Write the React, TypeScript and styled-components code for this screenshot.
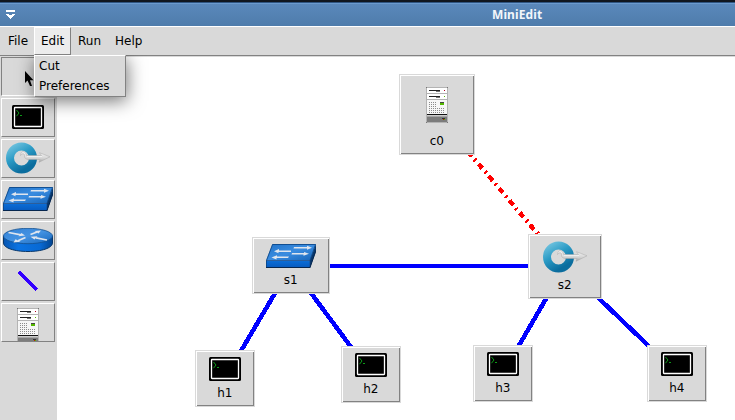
import type { ReactNode } from 'react';
import styled, { createGlobalStyle } from 'styled-components';

type Kind = 'host' | 'switch' | 'legacySwitch' | 'controller';

interface NodeData {
  id: string;
  kind: Kind;
  x: number;
  y: number;
  width: number;
  height: number;
}

const NODES: NodeData[] = [
  { id: 'c0', kind: 'controller', x: 399, y: 74, width: 76, height: 81 },
  { id: 's1', kind: 'legacySwitch', x: 252, y: 237, width: 78, height: 57 },
  { id: 's2', kind: 'switch', x: 528, y: 234, width: 74, height: 65 },
  { id: 'h1', kind: 'host', x: 195, y: 350, width: 60, height: 57 },
  { id: 'h2', kind: 'host', x: 341, y: 346, width: 60, height: 57 },
  { id: 'h3', kind: 'host', x: 473, y: 345, width: 60, height: 57 },
  { id: 'h4', kind: 'host', x: 647, y: 345, width: 60, height: 57 },
];

const LINKS = [
  [291, 266, 565, 266],
  [291, 266, 225, 378],
  [291, 266, 371, 374],
  [565, 266, 503, 373],
  [565, 266, 677, 373],
];

// canvas origin inside the window
const ORIGIN = { x: 57, y: 57 };

const HostIcon = () => (
  <svg width="32" height="24" viewBox="0 0 32 24">
    <rect width="32" height="24" rx="1.5" fill="#000" />
    <rect x="2.5" y="2.5" width="27" height="19" rx="0.5" fill="#000" stroke="#fff" strokeWidth="1.3" />
    <path d="M4.5 5l2.5 3-2.5 3.2M8 10.5h2" fill="none" stroke="#0c9a18" />
  </svg>
);

const SwitchIcon = () => (
  <svg width="44" height="32" viewBox="0 0 44 32">
    <defs>
      <linearGradient id="ring" x1="0" y1="0" x2="0.6" y2="1">
        <stop offset="0" stopColor="#6cc0dd" />
        <stop offset="0.45" stopColor="#2c9cc6" />
        <stop offset="1" stopColor="#0b6d9e" />
      </linearGradient>
      <linearGradient id="metal" x1="0" y1="0" x2="0" y2="1">
        <stop offset="0" stopColor="#f8f8f8" />
        <stop offset="0.6" stopColor="#d6d6d6" />
        <stop offset="1" stopColor="#a0a0a0" />
      </linearGradient>
    </defs>
    <circle cx="15.5" cy="16" r="11.5" fill="none" stroke="url(#ring)" strokeWidth="8" />
    <path
      d="M14.500 13.500c0-5 5.500-5 6 0h15l-2-2.800L44 14.800l-11 5.500 1-2.800H23c-3.500 0-5-2-4.500-4.500-.5-2-2.500-1.500-4 .5z"
      fill="url(#metal)"
      stroke="#a8a8a8"
      strokeWidth="0.5"
    />
    <path d="M21 14.500h15" stroke="#f4f4f4" strokeWidth="0.8" />
  </svg>
);

const LegacySwitchIcon = () => (
  <svg width="50" height="24" viewBox="0 0 50 24">
    <defs>
      <linearGradient id="box-top" x1="0" y1="0" x2="1" y2="1">
        <stop offset="0" stopColor="#1f72c8" />
        <stop offset="0.5" stopColor="#3a8ce0" />
        <stop offset="1" stopColor="#1463b8" />
      </linearGradient>
      <linearGradient id="box-front" x1="0" y1="0" x2="0" y2="1">
        <stop offset="0" stopColor="#0b6ed8" />
        <stop offset="1" stopColor="#0759bd" />
      </linearGradient>
    </defs>
    <path d="M6.500 0H50L44 16.500H0z" fill="url(#box-top)" />
    <path d="M50 0v7l-6 17v-8z" fill="#06366c" />
    <path d="M0 16.500h44V24H0z" fill="url(#box-front)" />
    <path d="M.5 24v-7.500L6.500.5H49.500L44 16.500" fill="none" stroke="#0b4380" strokeWidth="0.8" />
    <path d="M0 16.500h44v7.500" fill="none" stroke="#1b3f72" strokeWidth="0.6" />
    <path d="M0 23.500h44l6-17" fill="none" stroke="#06264e" />
    <g fill="#dfe5ee">
      <path d="M28 3h13V1.800l5 1.900-5 2V4.600H27.500z" />
      <path d="M25 6.400H13V5L8 7.200l4.500 2V8H25z" />
      <path d="M26 9h12V7.900l5 1.900-5.500 2v-1.200H25.500z" />
      <path d="M23 12.400H11v-1.200L5.500 13.400l5 2V14H22z" />
    </g>
  </svg>
);

const RouterIcon = () => (
  <svg width="50" height="24" viewBox="0 0 50 24">
    <defs>
      <linearGradient id="disc-top" x1="0" y1="0" x2="1" y2="1">
        <stop offset="0" stopColor="#3482d6" />
        <stop offset="0.5" stopColor="#4392e2" />
        <stop offset="1" stopColor="#1867bc" />
      </linearGradient>
      <linearGradient id="disc-side">
        <stop offset="0" stopColor="#0755b0" />
        <stop offset="0.3" stopColor="#0b73e2" />
        <stop offset="0.75" stopColor="#0869d4" />
        <stop offset="1" stopColor="#04458f" />
      </linearGradient>
    </defs>
    <path
      d="M.5 8v7c0 5 11 8.500 24.500 8.500S49.500 20 49.500 15V8z"
      fill="url(#disc-side)"
      stroke="#0a3768"
    />
    <ellipse cx="25" cy="8" rx="24.5" ry="7.7" fill="url(#disc-top)" stroke="#14508f" strokeWidth="0.8" />
    <g stroke="#dfe5ee" strokeWidth="1.7">
      <path d="M5.500 4.500L18 6.800M27.500 6.500L34 4M22.500 9.500L15 12.700M44 12L33 9.800" />
    </g>
    <g fill="#dfe5ee">
      <path d="M22 7.600L15.500 8.200L18.500 4.900z" />
      <path d="M38 2.500L35.500 5.600L31.500 3z" />
      <path d="M10.500 14.600L12.500 11.200L17.500 13.800z" />
      <path d="M27.500 8.700L34.500 8.300L31.500 11.400z" />
    </g>
  </svg>
);

const dots: [number, number][] = [];
for (let row = 0; row < 6; row++) {
  for (let col = 0; col < (row < 3 ? 4 : 8); col++) {
    dots.push([3 + col * 2, 15 + row * 2]);
  }
}

const ControllerIcon = () => (
  <svg width="22" height="48" viewBox="0 0 22 48">
    <g transform="translate(0 6)" shapeRendering="crispEdges">
      <rect width="22" height="36" fill="#b3b3b3" />
      <rect x="1" y="1" width="20" height="5" fill="#fff" />
      <rect x="1" y="7" width="20" height="5" fill="#fff" />
      <rect x="1" y="13" width="20" height="14" fill="#f6f6f6" />
      <rect x="1" y="27" width="20" height="1" fill="#111" />
      <rect x="1" y="28" width="20" height="1" fill="#ccc" />
      <rect x="1" y="29" width="20" height="6" fill="#7c7c7c" />
      <rect x="1" y="29" width="20" height="1" fill="#a5a5a5" />
      <path d="M3 3h11v1H3zM3 9h11v1H3z" fill="#222" />
      <path d="M10 4h4v1h-4zM10 10h4v1h-4z" fill="#777" />
      <path d="M18 3h1v1h-1z" fill="#b10020" />
      <path d="M18 9h1v1h-1zM14 16h4v2h-4z" fill="#55b800" />
      <path d="M14 15h4v1h-4z" fill="#444" />
      <path d="M16 31h3v1h-3z" fill="#333" />
      <path d="M17 32h1v1h-1z" fill="#c02000" />
      <path d="M18 32h1v1h-1z" fill="#55b800" />
      {dots.map(([x, y]) => (
        <rect key={`${x}-${y}`} x={x} y={y} width="1" height="1" fill="#8c8c8c" />
      ))}
      <path d="M0 0h1v1H0zM21 0h1v1h-1zM0 35h1v1H0zM21 35h1v1h-1z" fill="#777" />
    </g>
  </svg>
);

const PointerIcon = () => (
  <svg width="9" height="16" viewBox="0 0 9 16">
    <path d="M0 0v12l2.500-2.500L5 15h2L5 9.200h3.500z" fill="#000" />
  </svg>
);

const LinkIcon = () => (
  <svg width="20" height="20" viewBox="0 0 20 20" shapeRendering="crispEdges">
    <path d="M1 1l18 18" stroke="#3300ff" strokeWidth="3.2" />
  </svg>
);

const ICONS: Record<Kind, ReactNode> = {
  host: <HostIcon />,
  switch: <SwitchIcon />,
  legacySwitch: <LegacySwitchIcon />,
  controller: <ControllerIcon />,
};

const App = () => (
  <Window>
    <GlobalStyle />
    <TitleBar>
      <svg width="10" height="10" viewBox="0 0 10 10" shapeRendering="crispEdges">
        <path d="M0 0h9v2H0zM0 4h3v1h3V4h3v1H8v1H7v1H6v1H5v1H4V8H3V7H2V6H1V5H0z" fill="#fff" />
      </svg>
      <Title>MiniEdit</Title>
    </TitleBar>
    <MenuBar>
      <MenuItem $width={33}>File</MenuItem>
      <MenuItem $width={37} $active>
        Edit
        <Dropdown>
          <DropdownItem>Cut</DropdownItem>
          <DropdownItem>Preferences</DropdownItem>
        </Dropdown>
      </MenuItem>
      <MenuItem $width={37}>Run</MenuItem>
      <MenuItem $width={42}>Help</MenuItem>
    </MenuBar>
    <Body>
      <Toolbar>
        <ToolButton $sunken>
          <PointerIcon />
        </ToolButton>
        <ToolButton>
          <HostIcon />
        </ToolButton>
        <ToolButton>
          <SwitchIcon />
        </ToolButton>
        <ToolButton>
          <LegacySwitchIcon />
        </ToolButton>
        <ToolButton>
          <RouterIcon />
        </ToolButton>
        <ToolButton>
          <LinkIcon />
        </ToolButton>
        <ToolButton $top>
          <ControllerIcon />
        </ToolButton>
      </Toolbar>
      <Canvas>
        <Links viewBox="57 57 678 363" shapeRendering="crispEdges">
          {LINKS.map(([x1, y1, x2, y2]) => (
            <line
              key={`${x1}-${x2}`}
              x1={x1}
              y1={y1}
              x2={x2}
              y2={y2}
              stroke="#00f"
              strokeWidth={y1 === y2 ? 4 : 4.5}
            />
          ))}
          <line
            x1="437"
            y1="115"
            x2="565"
            y2="266"
            stroke="#f00"
            strokeWidth="4.5"
            strokeDasharray="6 4 2 4"
          />
        </Links>
        {NODES.map((node) => (
          <NodeBox key={node.id} $x={node.x} $y={node.y} $width={node.width} $height={node.height}>
            {ICONS[node.kind]}
            <NodeLabel>{node.id}</NodeLabel>
          </NodeBox>
        ))}
      </Canvas>
    </Body>
  </Window>
);

const GlobalStyle = createGlobalStyle`
  body {
    margin: 0;
    overflow: hidden;
  }

  svg {
    display: block;
    flex-shrink: 0;
  }
`;

const Window = styled.div`
  display: flex;
  flex-direction: column;
  width: 735px;
  height: 420px;
  overflow: hidden;
  background-color: #d9d9d9;
  color: #000;
  font-family: 'DejaVu Sans', sans-serif;
  font-size: 12px;
`;

const TitleBar = styled.header`
  display: flex;
  align-items: flex-start;
  box-sizing: border-box;
  height: 26px;
  padding: 8px 0 0 6px;
  border-top: 2px solid #10161f;
  background: linear-gradient(#2f5582 0 1px, #6b9ace 1px 2px, #5a88bb 2px, #4f7cab 100%);
`;

const Title = styled.h1`
  margin: -3px 0 0 476px;
  color: #f2f6fa;
  font: bold 12px/16px 'Noto Sans', sans-serif;
  letter-spacing: 0.1px;
`;

const MenuBar = styled.nav`
  display: flex;
  box-sizing: border-box;
  height: 30px;
  padding-left: 1px;
  border-top: 1px solid #fff;
  border-bottom: 1px solid #828282;
`;

const MenuItem = styled.div<{ $width: number; $active?: boolean }>`
  position: relative;
  box-sizing: border-box;
  width: ${(props) => props.$width}px;
  height: 28px;
  padding-left: 6px;
  border: 1px solid transparent;
  ${(props) => props.$active && 'border-color: #fff #828282 #828282 #fff; background-color: #ececec;'}
  line-height: 26px;
`;

const Dropdown = styled.div`
  position: absolute;
  z-index: 1;
  top: 27px;
  left: -1px;
  box-sizing: border-box;
  width: 92px;
  height: 42px;
  border: 1px solid;
  border-color: #fff #828282 #828282 #fff;
  background-color: #d9d9d9;
  box-shadow: 1px 4px 18px rgba(0, 0, 0, 0.55);
  clip-path: inset(0 -30px -30px -30px);
`;

const DropdownItem = styled.div`
  height: 20px;
  padding-left: 4px;
  line-height: 20px;
`;

const Body = styled.main`
  display: flex;
  flex: 1;
  min-height: 0;
`;

const Toolbar = styled.aside`
  display: flex;
  flex-direction: column;
  gap: 2px;
  box-sizing: border-box;
  width: 57px;
  padding: 1px 2px 0 1px;
`;

const ToolButton = styled.div<{ $sunken?: boolean; $top?: boolean }>`
  display: flex;
  align-items: ${(props) => (props.$top ? 'flex-start' : 'center')};
  justify-content: center;
  flex-shrink: 0;
  box-sizing: border-box;
  height: 39px;
  padding: ${(props) => (props.$sunken ? '5px 0 0 3px' : '0 0 1px')};
  overflow: hidden;
  border: 1px solid;
  border-color: ${(props) => (props.$sunken ? '#828282 #fff #fff #828282' : '#fff #828282 #828282 #fff')};

  ${(props) => props.$top && 'svg { margin-top: -2px; }'}
`;

const Canvas = styled.section`
  position: relative;
  flex: 1;
  margin-top: 1px;
  background-color: #fff;
`;

const Links = styled.svg`
  width: 678px;
  height: 363px;
`;

const NodeBox = styled.div<{ $x: number; $y: number; $width: number; $height: number }>`
  position: absolute;
  left: ${(props) => props.$x - ORIGIN.x}px;
  top: ${(props) => props.$y - ORIGIN.y}px;
  display: flex;
  flex-direction: column;
  align-items: center;
  box-sizing: border-box;
  width: ${(props) => props.$width}px;
  height: ${(props) => props.$height}px;
  padding-top: 5px;
  border: 1px solid #d9d9d9;
  background-color: #d9d9d9;
  box-shadow: inset 1px 1px #fff, inset -1px -1px #828282;

  svg {
    margin-top: 1px;
  }
`;

const NodeLabel = styled.span`
  margin: 4px 0.4px 0 0;
  line-height: 17px;
`;

export default App;
